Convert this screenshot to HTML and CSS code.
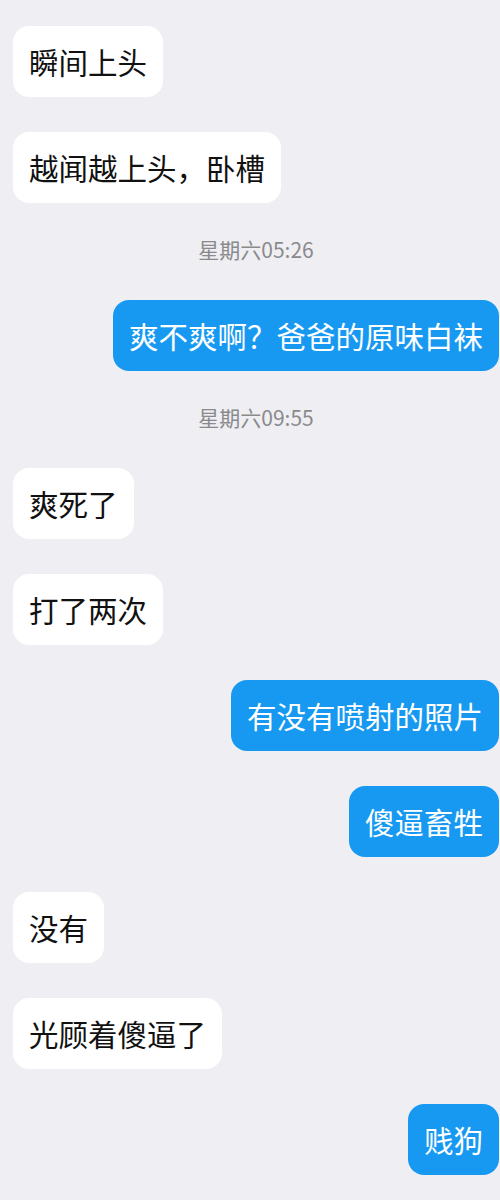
FILE: index.html
```html
<!DOCTYPE html>
<html lang="zh-CN">
<head>
    <meta charset="UTF-8">
    <meta name="viewport" content="width=device-width, initial-scale=1.0">
    <title>聊天</title>
    <link rel="stylesheet" href="styles.css">
</head>
<body>
    <main class="chat">
        <div class="msg them"><span class="bubble">瞬间上头</span></div>
        <div class="msg them"><span class="bubble">越闻越上头，卧槽</span></div>
        <div class="time">星期六05:26</div>
        <div class="msg me"><span class="bubble">爽不爽啊？爸爸的原味白袜</span></div>
        <div class="time">星期六09:55</div>
        <div class="msg them"><span class="bubble">爽死了</span></div>
        <div class="msg them"><span class="bubble">打了两次</span></div>
        <div class="msg me"><span class="bubble">有没有喷射的照片</span></div>
        <div class="msg me"><span class="bubble">傻逼畜牲</span></div>
        <div class="msg them"><span class="bubble">没有</span></div>
        <div class="msg them"><span class="bubble">光顾着傻逼了</span></div>
        <div class="msg me"><span class="bubble">贱狗</span></div>
    </main>
</body>
</html>
```

FILE: styles.css
```css
body {
    margin: 0;
    padding: 0;
    background-color: #efeff3;
    font-family: "Noto Sans CJK SC", "Noto Sans", sans-serif;
}

.chat {
    display: flex;
    flex-direction: column;
    gap: 35px;
    padding: 26px 1px 40px 13px;
}

.msg {
    display: flex;
}

.msg.them {
    justify-content: flex-start;
}

.msg.me {
    justify-content: flex-end;
}

.bubble {
    display: block;
    height: 71px;
    line-height: 71px;
    padding: 0 16px;
    border-radius: 16px;
    font-size: 29.5px;
    white-space: nowrap;
}

.them .bubble {
    background-color: #fff;
    color: #111;
}

.me .bubble {
    background-color: #1799f2;
    color: #fff;
}

.time {
    height: 27px;
    line-height: 27px;
    margin-top: -2px;
    margin-bottom: 2px;
    text-align: center;
    font-size: 21px;
    color: #8a8a8d;
}
```
